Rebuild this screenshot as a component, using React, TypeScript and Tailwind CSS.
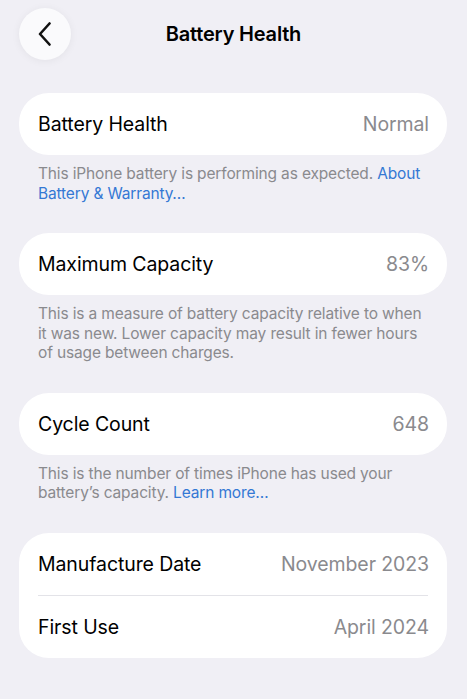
import React from "react";

const Row = ({ label, value }: { label: string; value: string }) => (
  <div className="flex h-[62px] items-center justify-between pl-[19px] pr-[18px] pt-[2px]">
    <span className="text-[19.5px] text-black tracking-[-0.1px]">{label}</span>
    <span className="text-[19.5px] text-[#8a8a8e] tracking-[-0.1px]">{value}</span>
  </div>
);

const Footer = ({ children }: { children: React.ReactNode }) => (
  <p className="mt-[9px] mb-[30px] px-[19px] text-[15.5px] leading-[19.5px] text-[#8a8a8e] tracking-[-0.15px]">
    {children}
  </p>
);

export default function App() {
  return (
    <div
      className="w-[467px] h-[699px] bg-[#f0eff5] overflow-hidden"
      style={{ fontFamily: "Inter, 'Liberation Sans', sans-serif" }}
    >
      <div className="relative flex h-[68px] items-center justify-center">
        <button className="absolute left-[19px] top-[8px] flex h-[52px] w-[52px] items-center justify-center rounded-full bg-[#fafafc] shadow-[0_1px_8px_rgba(0,0,0,0.06)]">
          <svg width="16" height="24" viewBox="0 0 16 24" fill="none">
            <path d="M12.5 1.5 L3 12 L12.5 22.5" stroke="#111" strokeWidth="2.6" strokeLinecap="round" strokeLinejoin="round" />
          </svg>
        </button>
        <h1 className="text-[20px] font-semibold text-black tracking-[-0.2px]">Battery Health</h1>
      </div>
      <div className="ml-[19px] mt-[25px] mr-[20px]">
        <div className="rounded-[30px] bg-white">
          <Row label="Battery Health" value="Normal" />
        </div>
        <Footer>
          This iPhone battery is performing as expected.{" "}
          <span className="text-[#3478d4]">About Battery &amp; Warranty…</span>
        </Footer>

        <div className="rounded-[30px] bg-white">
          <Row label="Maximum Capacity" value="83%" />
        </div>
        <Footer>
          This is a measure of battery capacity relative to when it was new. Lower capacity may result in fewer hours of usage between charges.
        </Footer>

        <div className="rounded-[30px] bg-white">
          <Row label="Cycle Count" value="648" />
        </div>
        <Footer>
          This is the number of times iPhone has used your battery’s capacity.{" "}
          <span className="text-[#3478d4]">Learn more…</span>
        </Footer>

        <div className="rounded-[30px] bg-white">
          <Row label="Manufacture Date" value="November 2023" />
          <div className="mx-[19px] h-px bg-[#e3e3e8]" />
          <Row label="First Use" value="April 2024" />
        </div>
      </div>
    </div>
  );
}
